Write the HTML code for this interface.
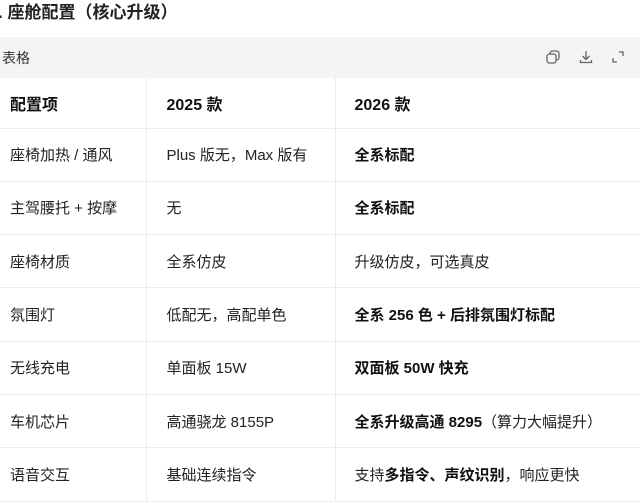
<!DOCTYPE html>
<html><head><meta charset="utf-8"><style>
body{margin:0;width:640px;height:473px;overflow:hidden;background:#fff;font-family:"Liberation Sans","Noto Sans CJK SC",sans-serif;color:#222}
h2{position:absolute;left:-2px;top:2px;margin:0;font-size:17px;font-weight:bold;line-height:22px}
.bar{position:absolute;left:-10px;top:37px;width:660px;height:41px;background:#f3f4f6;border-radius:10px 10px 0 0}
.bar span{position:absolute;left:12px;top:11px;font-size:14px;color:#333}
.bar svg{position:absolute;top:12px}
table{position:absolute;left:0;top:78px;border-collapse:collapse;font-size:15px}
td{height:53.3px;padding:0;border-bottom:1px solid #ececec;border-right:1px solid #ececec;vertical-align:middle}
td:nth-child(1){width:146px;padding-left:10px;box-sizing:border-box}
td:nth-child(2){width:189px;padding-left:20px;box-sizing:border-box}
td:nth-child(3){width:305px;padding-left:19px;box-sizing:border-box;border-right:none}
b{font-weight:bold;color:#111}
tr:first-child td{height:50px;font-size:16px}
</style></head><body>
<h2>. 座舱配置（核心升级）</h2>
<div class="bar"><span>表格</span>
<svg style="left:555px" width="16" height="16" viewBox="0 0 16 16" fill="none" stroke="#666" stroke-width="1.3"><rect x="5" y="2" width="9" height="9" rx="2.5"/><rect x="2" y="5" width="9" height="9" rx="2.5" fill="#f3f4f6"/></svg>
<svg style="left:588px" width="16" height="16" viewBox="0 0 16 16" fill="none" stroke="#666" stroke-width="1.3"><path d="M8 2v8M4.5 7L8 10.5 11.5 7M2.5 11v2.5h11V11"/></svg>
<svg style="left:620px" width="16" height="16" viewBox="0 0 16 16" fill="none" stroke="#666" stroke-width="1.3"><path d="M9 3h4v4M7 13H3V9"/></svg>
</div>
<table>
<tr><td><b>配置项</b></td><td><b>2025 款</b></td><td><b>2026 款</b></td></tr>
<tr><td>座椅加热 / 通风</td><td>Plus 版无，Max 版有</td><td><b>全系标配</b></td></tr>
<tr><td>主驾腰托 + 按摩</td><td>无</td><td><b>全系标配</b></td></tr>
<tr><td>座椅材质</td><td>全系仿皮</td><td>升级仿皮，可选真皮</td></tr>
<tr><td>氛围灯</td><td>低配无，高配单色</td><td><b>全系 256 色 + 后排氛围灯标配</b></td></tr>
<tr><td>无线充电</td><td>单面板 15W</td><td><b>双面板 50W 快充</b></td></tr>
<tr><td>车机芯片</td><td>高通骁龙 8155P</td><td><b>全系升级高通 8295</b>（算力大幅提升）</td></tr>
<tr><td>语音交互</td><td>基础连续指令</td><td>支持<b>多指令、声纹识别</b>，响应更快</td></tr>
</table>
</body></html>
